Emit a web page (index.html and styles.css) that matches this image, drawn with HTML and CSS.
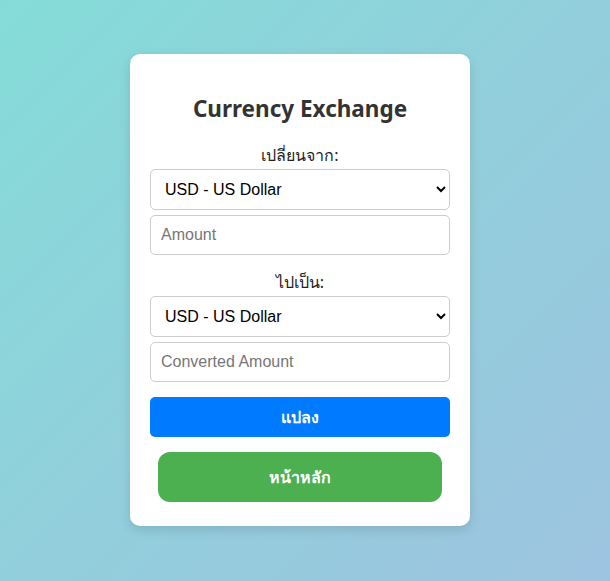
FILE: index.html
```html
<!DOCTYPE html>
<html lang="th">
<head>
<meta charset="utf-8">
<title>Currency Exchange</title>
<link rel="stylesheet" href="styles.css">
</head>
<body>
<main class="card">
  <h2 class="title">Currency Exchange</h2>
  <label class="label" for="from">เปลี่ยนจาก:</label>
  <select id="from" class="field select">
    <option>USD - US Dollar</option>
    <option>THB - Thai Baht</option>
    <option>EUR - Euro</option>
  </select>
  <input class="field input" type="number" placeholder="Amount">
  <label class="label label-second" for="to">ไปเป็น:</label>
  <select id="to" class="field select">
    <option>USD - US Dollar</option>
    <option>THB - Thai Baht</option>
    <option>EUR - Euro</option>
  </select>
  <input class="field input" type="text" placeholder="Converted Amount" readonly>
  <button class="btn btn-convert" type="button">แปลง</button>
  <button class="btn btn-home" type="button">หน้าหลัก</button>
</main>
</body>
</html>
```
FILE: styles.css
```css
* { box-sizing: border-box; }
html, body { height: 100%; }
body {
  margin: 0;
  font-family: "Noto Sans", "Open Sans", "Liberation Sans", sans-serif;
  background: linear-gradient(135deg, #84dcd8 0%, #92cfdc 50%, #9dc3e0 100%);
  display: flex;
  justify-content: center;
  align-items: flex-start;
  padding: 54px 10px 0 0;
}
.card {
  width: 340px;
  background: #fff;
  border-radius: 10px;
  box-shadow: 0 4px 12px rgba(0, 0, 0, 0.12);
  padding: 20px 20px 24px;
  display: flex;
  flex-direction: column;
  align-items: stretch;
}
.title {
  margin: 20px 0 21px;
  text-align: center;
  font-size: 22.5px;
  line-height: 30px;
  font-weight: 700;
  color: #333;
}
.label {
  text-align: center;
  font-size: 16px;
  line-height: 20px;
  color: #222;
  margin-bottom: 4px;
}
.label-second { margin-top: 17px; }
.field {
  width: 100%;
  font-family: "Liberation Sans", Arial, sans-serif;
  font-size: 16px;
  border: 1px solid #ccc;
  border-radius: 5px;
  background: #fff;
  color: #000;
}
.select {
  height: 41px;
  padding: 0 10px;
}
.input {
  height: 40px;
  margin-top: 5px;
  padding: 0 10px;
}
.input::placeholder { color: #767676; }
.btn {
  border: none;
  color: #fff;
  font-family: "Noto Sans", "Liberation Sans", sans-serif;
  font-weight: 700;
  font-size: 16px;
  cursor: pointer;
}
.btn-convert {
  margin-top: 15px;
  height: 40px;
  background: #007bff;
  border-radius: 5px;
}
.btn-home {
  margin: 15px 8px 0;
  height: 50px;
  background: #4caf50;
  border-radius: 12px;
}
```
